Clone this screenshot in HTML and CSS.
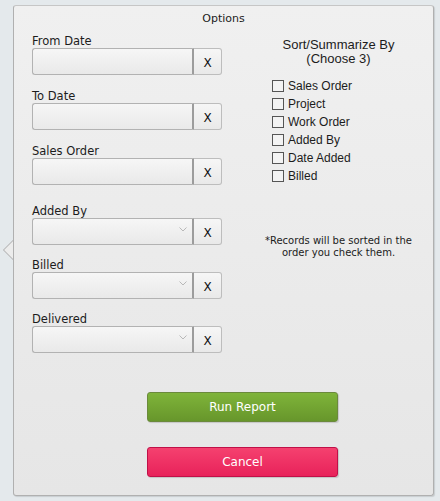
FILE: index.html
```html
<!DOCTYPE html>
<html>
<head>
<meta charset="utf-8">
<link rel="stylesheet" href="styles.css">
</head>
<body>
<div class="panel">
  <span class="arrow"></span>
  <div class="title">Options</div>
  <div class="columns">
    <div class="left">
      <div class="group">
        <div class="field">
          <div class="label">From Date</div>
          <div class="control"><div class="box"></div><div class="clear">X</div></div>
        </div>
        <div class="field">
          <div class="label">To Date</div>
          <div class="control"><div class="box"></div><div class="clear">X</div></div>
        </div>
        <div class="field">
          <div class="label">Sales Order</div>
          <div class="control"><div class="box"></div><div class="clear">X</div></div>
        </div>
      </div>
      <div class="group selects">
        <div class="field">
          <div class="label">Added By</div>
          <div class="control"><div class="box select"><svg class="chev" width="8" height="5" viewBox="0 0 8 5"><path d="M0.5 0.5 L4 4 L7.5 0.5" fill="none" stroke="#b8b8b8" stroke-width="1"/></svg></div><div class="clear">X</div></div>
        </div>
        <div class="field">
          <div class="label">Billed</div>
          <div class="control"><div class="box select"><svg class="chev" width="8" height="5" viewBox="0 0 8 5"><path d="M0.5 0.5 L4 4 L7.5 0.5" fill="none" stroke="#b8b8b8" stroke-width="1"/></svg></div><div class="clear">X</div></div>
        </div>
        <div class="field">
          <div class="label">Delivered</div>
          <div class="control"><div class="box select"><svg class="chev" width="8" height="5" viewBox="0 0 8 5"><path d="M0.5 0.5 L4 4 L7.5 0.5" fill="none" stroke="#b8b8b8" stroke-width="1"/></svg></div><div class="clear">X</div></div>
        </div>
      </div>
    </div>
    <div class="right">
      <div class="sort-title">Sort/Summarize By<br>(Choose 3)</div>
      <ul class="checks">
        <li><span class="cb"></span>Sales Order</li>
        <li><span class="cb"></span>Project</li>
        <li><span class="cb"></span>Work Order</li>
        <li><span class="cb"></span>Added By</li>
        <li><span class="cb"></span>Date Added</li>
        <li><span class="cb"></span>Billed</li>
      </ul>
      <p class="note">*Records will be sorted in the<br>order you check them.</p>
    </div>
  </div>
  <div class="actions">
    <div class="btn run">Run Report</div>
    <div class="btn cancel">Cancel</div>
  </div>
</div>
</body>
</html>
```

FILE: styles.css
```css
* { box-sizing: border-box; }
html, body { margin: 0; padding: 0; }
body {
  background: #e4e9ec;
  font-family: "DejaVu Sans", Verdana, sans-serif;
  color: #1c1c1c;
  width: 440px;
  height: 501px;
  overflow: hidden;
}
.panel {
  position: relative;
  margin: 5px 0 0 13px;
  width: 421px;
  height: 491px;
  border: 1px solid #b0b0b0;
  border-top-color: #c6c6c6;
  border-radius: 3px;
  background: linear-gradient(#f0f0f0, #e6e6e6);
  box-shadow: 1px 1px 1px rgba(0,0,0,0.12);
}
.arrow {
  position: absolute;
  left: -11px;
  top: 234px;
  width: 0;
  height: 0;
  border-top: 10px solid transparent;
  border-bottom: 10px solid transparent;
  border-right: 10px solid #a8a8a8;
}
.arrow::after {
  content: "";
  position: absolute;
  left: 1px;
  top: -9px;
  border-top: 9px solid transparent;
  border-bottom: 9px solid transparent;
  border-right: 9px solid #ececec;
}
.title {
  text-align: center;
  font-size: 11px;
  line-height: 14px;
  padding-top: 6px;
  height: 28px;
}
.columns {
  display: flex;
}
.left {
  width: 230px;
  padding-left: 18px;
  display: flex;
  flex-direction: column;
  gap: 19px;
}
.group {
  display: flex;
  flex-direction: column;
  gap: 14px;
}
.selects { gap: 13px; }
.label {
  font-size: 11.5px;
  line-height: 14px;
}
.control {
  display: flex;
  height: 27px;
  width: 190px;
}
.box {
  width: 162px;
  height: 27px;
  border: 1px solid #b2b2b2;
  border-right: 2px solid #9c9c9c;
  border-radius: 3px 0 0 3px;
  background: linear-gradient(#f6f6f6, #e9e9e9);
  position: relative;
}
.chev {
  position: absolute;
  right: 5px;
  top: 8px;
}
.clear {
  width: 28px;
  height: 27px;
  border: 1px solid #bdbdbd;
  border-left: none;
  border-radius: 0 3px 3px 0;
  background: linear-gradient(#f6f6f6, #e9e9e9);
  font-size: 12px;
  line-height: 14px;
  text-align: center;
  padding-top: 7px;
  color: #111;
}
.right {
  width: 189px;
  margin-left: 0;
  padding-top: 4px;
}
.sort-title {
  font-family: "Liberation Sans", Arial, sans-serif;
  font-size: 13px;
  line-height: 14px;
  text-align: center;
}
.checks {
  list-style: none;
  margin: 11px 0 0 0;
  padding: 0 0 0 28px;
  font-family: "Liberation Sans", Arial, sans-serif;
  font-size: 12px;
}
.checks li {
  display: flex;
  align-items: center;
  height: 18px;
}
.cb {
  display: inline-block;
  width: 12px;
  height: 12px;
  border: 1px solid #555;
  background: #f3f3f3;
  margin-right: 4px;
}
.note {
  margin: 50px 0 0 0;
  font-size: 10px;
  line-height: 12px;
  text-align: center;
}
.actions {
  position: absolute;
  left: 133px;
  top: 386px;
  display: flex;
  flex-direction: column;
  gap: 25px;
}
.btn {
  width: 191px;
  height: 30px;
  border-radius: 3px;
  color: #fff;
  font-size: 12px;
  line-height: 28px;
  text-align: center;
}
.run {
  background: linear-gradient(#7fb43a, #67962b);
  border: 1px solid #6b8a3c;
  box-shadow: 1px 1px 1px rgba(0,0,0,0.15);
}
.cancel {
  background: linear-gradient(#f5416f, #e8225a);
  border: 1px solid #c01048;
  box-shadow: 1px 1px 1px rgba(0,0,0,0.15);
}
```
